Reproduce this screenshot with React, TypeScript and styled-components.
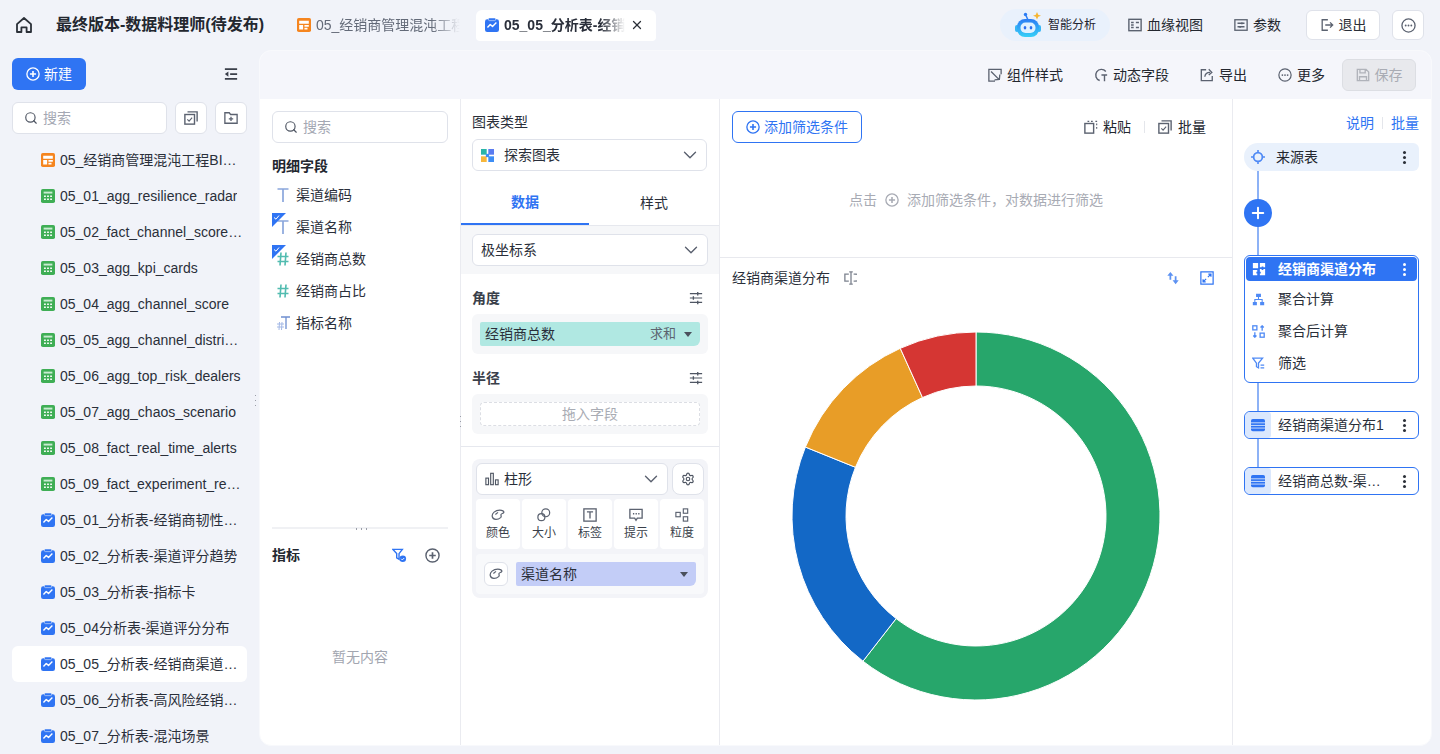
import React from 'react';
import styled, {createGlobalStyle} from "styled-components";
import {ChevronDown, Plus, Search, Settings, X} from "lucide-react";

const GlobalStyle = createGlobalStyle`
  html, body {
    margin: 0;
    height: 100%;
    overflow: hidden;
    background: #f1f3f9;
  }
  body {
    font-family: "Liberation Sans", "Noto Sans CJK SC", sans-serif;
    font-size: 14px;
    line-height: 20px;
    color: #1f2430;
  }
  * {
    box-sizing: border-box;
  }
`

const Page = styled.div`
  width: 1440px;
  height: 754px;
  display: flex;
  flex-direction: column;
  overflow: hidden;
`

const TopBar = styled.header`
  height: 50px;
  flex: none;
  display: flex;
  align-items: center;
  padding: 0 16px 0 15px;
`

const HomeButton = styled.div`
  width: 18px;
  height: 18px;
  margin-right: 23px;
  color: #2b3038;
`

const Title = styled.div`
  width: 223px;
  flex: none;
  font-size: 16px;
  line-height: 24px;
  font-weight: 700;
  white-space: nowrap;
  margin-right: 18px;
  color: #23272f;
`

const Tab = styled.div<{ $active?: boolean }>`
  display: flex;
  align-items: center;
  gap: 5px;
  height: 31px;
  padding: 0 ${p => p.$active ? "12px 0 9px" : "0"};
  width: ${p => p.$active ? "180px" : "163px"};
  margin-right: ${p => p.$active ? "0" : "16px"};
  background: ${p => p.$active ? "#fff" : "transparent"};
  border-radius: 6px 6px 4px 4px;
  font-weight: ${p => p.$active ? 700 : 400};
  color: ${p => p.$active ? "#2a2f3a" : "#636a78"};
  flex: none;
`

const TabText = styled.span`
  flex: 1;
  overflow: hidden;
  white-space: nowrap;
  mask-image: linear-gradient(to right, #000 80%, transparent 100%);
`

const TopRight = styled.div`
  margin-left: auto;
  display: flex;
  align-items: center;
`

const AiPill = styled.div`
  width: 110px;
  height: 32px;
  border-radius: 16px;
  background: #e9f1fc;
  display: flex;
  align-items: center;
  padding-left: 15px;
  gap: 5px;
  font-size: 12px;
  margin-right: 18px;
`

const TextAction = styled.div<{ $gap?: number, $inner?: number }>`
  display: flex;
  align-items: center;
  gap: ${p => p.$inner ?? 5}px;
  margin-right: ${p => p.$gap ?? 31}px;
  color: #23272f;
  white-space: nowrap;
`

const OutlineButton = styled.div<{ $width: number, $offset?: number }>`
  width: ${p => p.$width}px;
  height: 30px;
  margin-left: ${p => p.$offset ?? 0}px;
  background: #fff;
  border: 1px solid #dfe2ea;
  border-radius: 6px;
  display: flex;
  align-items: center;
  justify-content: center;
  gap: 5px;
  color: #2b3038;
`

const Body = styled.div`
  flex: 1;
  display: flex;
  min-height: 0;
  position: relative;
`

const Sidebar = styled.aside`
  width: 259px;
  flex: none;
  padding: 8px 12px 0;
  overflow: hidden;
`

const SideHead = styled.div`
  display: flex;
  align-items: center;
  justify-content: space-between;
  padding-right: 9px;
  margin-bottom: 12px;
`

const NewButton = styled.div`
  width: 74px;
  height: 32px;
  border-radius: 6px;
  background: #2f74f3;
  color: #fff;
  display: flex;
  align-items: center;
  justify-content: center;
  gap: 4px;
`

const SearchRow = styled.div`
  display: flex;
  gap: 8px;
  margin-bottom: 8px;
`

const SearchBox = styled.div<{ $width: number }>`
  width: ${p => p.$width}px;
  height: 32px;
  background: #fff;
  border: 1px solid #dfe2ea;
  border-radius: 6px;
  display: flex;
  align-items: center;
  gap: 5px;
  padding-left: 11px;
  color: #a4a8b3;
`

const SquareButton = styled.div`
  width: 32px;
  height: 32px;
  background: #fff;
  border: 1px solid #dfe2ea;
  border-radius: 6px;
  display: flex;
  align-items: center;
  justify-content: center;
  color: #5b6270;
`

const TreeRow = styled.div<{ $active?: boolean }>`
  height: 36px;
  width: 235px;
  display: flex;
  align-items: center;
  gap: 5px;
  padding: 0 4px 0 29px;
  border-radius: 6px;
  background: ${p => p.$active ? "#fff" : "transparent"};
  color: #2a2f3a;
`

const TreeText = styled.span`
  overflow: hidden;
  white-space: nowrap;
  text-overflow: ellipsis;
`

const Dots = styled.div<{ $x: number, $y: number, $wide?: boolean }>`
  position: absolute;
  left: ${p => p.$x}px;
  top: ${p => p.$y}px;
  width: ${p => p.$wide ? 14 : 5}px;
  height: ${p => p.$wide ? 8 : 14}px;
  background-image: radial-gradient(circle, #9a9ea8 0.8px, transparent 1px);
  background-size: ${p => p.$wide ? "5px 8px" : "5px 5px"};
`

const Panel = styled.main`
  flex: none;
  width: 1173px;
  height: 696px;
  background: #fff;
  border: 1px solid #f8f9fc;
  border-radius: 12px;
  overflow: hidden;
  display: flex;
  flex-direction: column;
`

const PanelBar = styled.div`
  height: 48px;
  flex: none;
  background: #f5f6fb;
  display: flex;
  align-items: center;
  justify-content: flex-end;
  padding-right: 15px;
`

const SaveButton = styled.div`
  width: 74px;
  height: 32px;
  border-radius: 6px;
  background: #e8e9ed;
  border: 1px solid #dcdee3;
  color: #a9acb4;
  display: flex;
  align-items: center;
  justify-content: center;
  gap: 5px;
`

const Columns = styled.div`
  flex: 1;
  min-height: 0;
  display: flex;
`

const FieldColumn = styled.section`
  width: 200px;
  flex: none;
  padding: 12px 12px 0;
  display: flex;
  flex-direction: column;
`

const GroupTitle = styled.div`
  font-weight: 700;
  margin: 15px 0 5px;
  line-height: 16px;
  color: #23272f;
`

const FieldRow = styled.div`
  height: 32px;
  display: flex;
  align-items: center;
  gap: 6px;
  padding-left: 4px;
  position: relative;
  color: #2a2f3a;
`

const CheckCorner = styled.svg`
  position: absolute;
  left: 0;
  top: 2px;
`

const FieldGlyph = styled.span`
  width: 14px;
  height: 16px;
  display: flex;
  align-items: center;
  justify-content: center;
`

const FieldDivider = styled.div`
  height: 2px;
  background: #f0f1f4;
  margin-top: 188px;
`

const MetricHead = styled.div`
  display: flex;
  align-items: center;
  height: 16px;
  margin-top: 18px;
  font-weight: 700;
  color: #23272f;
`

const MetricIcons = styled.div`
  margin-left: auto;
  padding-right: 8px;
  display: flex;
  gap: 18px;
  align-items: center;
`

const EmptyNote = styled.div`
  text-align: center;
  margin-top: 84px;
  color: #a2a6b0;
  line-height: 20px;
`

const ConfigColumn = styled.section`
  width: 260px;
  flex: none;
  border-left: 1px solid #eaebf0;
  border-right: 1px solid #eaebf0;
  display: flex;
  flex-direction: column;
`

const ConfigLabel = styled.div`
  padding: 15px 11px 9px;
  line-height: 16px;
  color: #2a2f3a;
`

const SelectBox = styled.div<{ $width?: number, $height?: number }>`
  width: ${p => p.$width ?? 235}px;
  height: ${p => p.$height ?? 32}px;
  background: #fff;
  border: 1px solid #dfe2ea;
  border-radius: 6px;
  display: flex;
  align-items: center;
  gap: 5px;
  padding: 0 5px 0 8px;
  color: #2a2f3a;
  flex: none;
`

const SelectText = styled.span<{ $indent?: number }>`
  flex: 1;
  margin-left: ${p => p.$indent ?? 0}px;
`

const ChartTypeWrap = styled.div`
  padding-left: 11px;
`

const TabRow = styled.div`
  margin-top: 9px;
  height: 46px;
  display: flex;
  border-bottom: 1px solid #e6e8ee;
`

const ConfigTab = styled.div<{ $active?: boolean }>`
  width: ${p => p.$active ? 128 : 130}px;
  height: 45px;
  display: flex;
  align-items: center;
  justify-content: center;
  font-weight: ${p => p.$active ? 700 : 400};
  color: ${p => p.$active ? "#2f74f3" : "#2a2f3a"};
  border-bottom: ${p => p.$active ? "2px solid #2f74f3" : "none"};
`

const CoordBand = styled.div`
  background: #f6f7f9;
  height: 48px;
  padding: 8px 11px 0;
`

const ShelfSection = styled.div`
  padding: 0 11px;
`

const ShelfHead = styled.div`
  height: 16px;
  margin: 16px 0 8px;
  display: flex;
  align-items: center;
  justify-content: space-between;
  font-weight: 700;
  color: #3a3f4a;
  padding-right: 5px;
`

const ShelfBox = styled.div`
  width: 236px;
  height: 40px;
  border-radius: 6px;
  background: #f6f7f9;
  padding: 8px;
`

const Pill = styled.div<{ $color: string }>`
  height: 24px;
  background: ${p => p.$color};
  border-radius: 2px 2px 6px 2px;
  display: flex;
  align-items: center;
  padding: 0 8px 0 5px;
  color: #2a2f3a;
`

const PillRight = styled.span`
  margin-left: auto;
  display: flex;
  align-items: center;
  gap: 8px;
  font-size: 13px;
  color: #5c6470;
`

const Caret = styled.span`
  width: 0;
  height: 0;
  border-left: 4px solid transparent;
  border-right: 4px solid transparent;
  border-top: 5px solid #4a505c;
  margin-left: auto;
`

const DropZone = styled.div`
  height: 24px;
  border: 1px dashed #dcdee4;
  border-radius: 4px;
  background: #fff;
  color: #a9acb4;
  display: flex;
  align-items: center;
  justify-content: center;
`

const SectionRule = styled.div`
  height: 1px;
  background: #e6e8ee;
  margin: 12px 0;
`

const MarkCard = styled.div`
  margin-left: 11px;
  width: 236px;
  height: 139px;
  background: #f3f4f8;
  border-radius: 8px;
  padding: 4px;
`

const MarkTop = styled.div`
  display: flex;
  gap: 4px;
`

const GearButton = styled(SquareButton)`
  border-radius: 8px;
`

const TileRow = styled.div`
  display: flex;
  gap: 2px;
  margin-top: 4px;
`

const Tile = styled.div`
  width: 44px;
  height: 50px;
  background: #fff;
  border-radius: 4px;
  display: flex;
  flex-direction: column;
  align-items: center;
  justify-content: center;
  gap: 3px;
  font-size: 12px;
  line-height: 16px;
  color: #3a3f4a;
`

const MarkField = styled.div`
  margin-top: 5px;
  height: 40px;
  background: #f8f9fb;
  border-radius: 4px;
  display: flex;
  align-items: center;
  gap: 8px;
  padding: 0 8px;
`

const PaletteButton = styled.div`
  width: 24px;
  height: 24px;
  flex: none;
  background: #fff;
  border: 1px solid #dfe2ea;
  border-radius: 6px;
  display: flex;
  align-items: center;
  justify-content: center;
`

const WidePill = styled(Pill)`
  flex: 1;
`

const CenterColumn = styled.section`
  width: 512px;
  flex: none;
  display: flex;
  flex-direction: column;
`

const FilterArea = styled.div`
  height: 159px;
  flex: none;
  border-bottom: 1px solid #e8e9ee;
  padding: 12px 12px 0;
`

const FilterTop = styled.div`
  display: flex;
  align-items: center;
`

const AddFilterButton = styled.div`
  width: 130px;
  height: 32px;
  border: 1px solid #2f74f3;
  border-radius: 6px;
  color: #2f74f3;
  display: flex;
  align-items: center;
  justify-content: center;
  gap: 4px;
`

const FilterActions = styled.div`
  margin-left: auto;
  padding-right: 14px;
  display: flex;
  align-items: center;
  color: #23272f;
`

const ThinSplit = styled.span<{ $space?: number }>`
  width: 1px;
  height: 12px;
  background: #e4e6eb;
  margin: 0 ${p => p.$space ?? 13}px;
`

const FilterHint = styled.div`
  display: flex;
  align-items: center;
  justify-content: center;
  gap: 8px;
  margin-top: 47px;
  height: 20px;
  color: #a8abb4;
`

const ChartHead = styled.div`
  height: 40px;
  flex: none;
  display: flex;
  align-items: center;
  padding: 0 18px 0 12px;
  color: #2a2f3a;
  gap: 14px;
`

const ChartHeadRight = styled.div`
  margin-left: auto;
  display: flex;
  align-items: center;
  gap: 20px;
`

const ChartBody = styled.div`
  flex: 1;
  display: flex;
  justify-content: center;
  padding-top: 33px;
`

const FlowColumn = styled.section`
  flex: 1;
  min-width: 0;
  padding: 14px 12px 0 11px;
  display: flex;
  flex-direction: column;
  border-left: 1px solid #eaebf0;
`

const FlowLinks = styled.div`
  align-self: flex-end;
  display: flex;
  align-items: center;
  color: #2f74f3;
  height: 20px;
  margin-bottom: 10px;
`

const SourceNode = styled.div`
  height: 28px;
  border-radius: 14px 6px 6px 14px;
  background: #e9f1fc;
  display: flex;
  align-items: center;
  padding: 0 5px 0 7px;
  gap: 11px;
  color: #23272f;
`

const MoreDots = styled.span<{ $light?: boolean }>`
  margin-left: auto;
  width: 20px;
  flex: none;
  display: flex;
  flex-direction: column;
  align-items: center;
  gap: 2px;
  i {
    display: block;
    width: 3px;
    height: 3px;
    border-radius: 50%;
    background: ${p => p.$light ? "#fff" : "#2b3038"};
  }
`

const Connector = styled.div<{ $height: number }>`
  height: ${p => p.$height}px;
  width: 28px;
  display: flex;
  align-items: center;
  justify-content: center;
  background: linear-gradient(#8db2f6, #8db2f6) center / 2px 100% no-repeat;
`

const PlusCircle = styled.div`
  width: 28px;
  height: 28px;
  border-radius: 50%;
  background: #2f74f3;
  display: flex;
  align-items: center;
  justify-content: center;
`

const NodeCard = styled.div`
  border: 1px solid #2f74f3;
  border-radius: 6px;
  padding: 1px;
  height: 128px;
`

const NodeHead = styled.div`
  height: 24px;
  margin-bottom: 2px;
  background: #2f74f3;
  border-radius: 4px;
  color: #fff;
  font-weight: 700;
  display: flex;
  align-items: center;
  gap: 12px;
  padding: 0 3px 0 6px;
`

const NodeStep = styled.div`
  height: 32px;
  display: flex;
  align-items: center;
  gap: 13px;
  padding-left: 6px;
  color: #2a2f3a;
`

const TableNode = styled.div`
  height: 28px;
  border: 1px solid #2f74f3;
  border-radius: 6px;
  display: flex;
  align-items: center;
  gap: 7px;
  padding-right: 4px;
  color: #2a2f3a;
  overflow: hidden;
`

const TableNodeIcon = styled.span`
  width: 26px;
  height: 26px;
  flex: none;
  background: #dbe8fd;
  border-radius: 5px 3px 3px 5px;
  display: flex;
  align-items: center;
  justify-content: center;
`

const NodeName = styled.span`
  overflow: hidden;
  white-space: nowrap;
  text-overflow: ellipsis;
  max-width: 107px;
`

type IconProps = { size?: number, color?: string }

const svgBase = (size: number) => ({
    width: size, height: size, viewBox: "0 0 16 16", fill: "none", style: {flex: "none"}
} as const)

const HomeIcon = () => (
    <svg width="18" height="18" viewBox="0 0 18 18" fill="none" stroke="currentColor" strokeWidth="1.8">
        <path d="M2 8.2 9 2l7 6.2V16h-4.4v-4.6H6.4V16H2z" strokeLinejoin="round"/>
    </svg>
)

const DashIcon = ({size = 14}: IconProps) => (
    <svg {...svgBase(size)}>
        <rect width="16" height="16" rx="2" fill="#f5851f"/>
        <path d="M2.5 3h11v3.5h-11zM2.5 8H7v5H2.5zM8.5 8h5v2h-5zM8.5 11.2h3.5V13H8.5z" fill="#fff"/>
    </svg>
)

const TableIcon = () => (
    <svg {...svgBase(14)}>
        <rect width="16" height="16" rx="2" fill="#3fae55"/>
        <path d="M3 3h10v2.2H3z" fill="#c9ebd1"/>
        <path d="M3.500 7.500h2v1.500h-2zM7 7.500h2v1.500H7zM10.500 7.500h2v1.500h-2zM3.500 10.800h2v1.700h-2zM7 10.800h2v1.700H7zM10.500 10.800h2v1.700h-2z" fill="#fff"/>
    </svg>
)

const AnalysisIcon = ({size = 14}: IconProps) => (
    <svg {...svgBase(size)}>
        <rect y="1.5" width="16" height="14.5" rx="2.5" fill="#2f74f3"/>
        <rect x="4" width="8" height="3" rx="1" fill="#2f74f3" stroke="#dbe6fb" strokeWidth=".7"/>
        <path d="m2.8 10.8 3.2-3.4 2.6 2.2 4.4-4.4" stroke="#fff" strokeWidth="1.6" strokeLinejoin="round"/>
    </svg>
)

const RobotIcon = () => (
    <svg width="28" height="26" viewBox="0 0 28 26" fill="none" style={{flex: "none"}}>
        <defs>
            <linearGradient id="robotFill" x1="0" y1="0" x2="0" y2="1">
                <stop offset="0" stopColor="#2b7cf4"/>
                <stop offset="1" stopColor="#36d0f7"/>
            </linearGradient>
        </defs>
        <path d="M13 8 11 3.500" stroke="#2b7cf4" strokeWidth="1.500"/>
        <circle cx="10.500" cy="2.500" r="1.700" fill="#2b7cf4"/>
        <path d="m22 0 1.200 2.800 2.800 1-2.800 1L22 7.600l-1.200-2.800-2.800-1 2.800-1z" fill="#f7b531"/>
        <rect x="0" y="13" width="4" height="7" rx="2" fill="#34b6f6"/>
        <rect x="22" y="13" width="4" height="7" rx="2" fill="#34b6f6"/>
        <rect x="2" y="7" width="22" height="18" rx="8" fill="url(#robotFill)"/>
        <rect x="5.500" y="10.500" width="15" height="10.500" rx="5" fill="#dff1ff"/>
        <ellipse cx="10" cy="15.700" rx="1.300" ry="1.800" fill="#2b6ff0"/>
        <ellipse cx="16" cy="15.700" rx="1.300" ry="1.800" fill="#2b6ff0"/>
    </svg>
)

const LineageIcon = () => (
    <svg {...svgBase(14)} stroke="#5b6270" strokeWidth="1.6">
        <rect x="1" y="1.5" width="14" height="13" fill="none"/>
        <path d="M3.500 5.200h3M3.500 8h3M3.500 10.800h3M9 5.200h3.500M9 10.800h3.500"/>
    </svg>
)

const ParamIcon = () => (
    <svg {...svgBase(14)} stroke="#5b6270" strokeWidth="1.5">
        <rect x="1" y="2" width="14" height="12"/>
        <path d="M4 6h8M4 10h8"/>
        <path d="M9 5v2M7 9v2" strokeWidth="1.8"/>
    </svg>
)

const ExitIcon = () => (
    <svg {...svgBase(14)} stroke="#5b6270" strokeWidth="1.500">
        <path d="M9 2H2.500v12H9M6 8h8.500M11.500 5l3 3-3 3"/>
    </svg>
)

const EllipsisCircle = ({size = 14, color = "#5b6270"}: IconProps) => (
    <svg {...svgBase(size)}>
        <circle cx="8" cy="8" r="7" stroke={color} strokeWidth="1.4"/>
        <circle cx="5" cy="8" r="1" fill={color}/>
        <circle cx="8" cy="8" r="1" fill={color}/>
        <circle cx="11" cy="8" r="1" fill={color}/>
    </svg>
)

const PlusCircleIcon = ({size = 14, color = "#fff"}: IconProps) => (
    <svg {...svgBase(size)} stroke={color}>
        <circle cx="8" cy="8" r="7" strokeWidth="1.5"/>
        <path d="M8 4.500v7M4.500 8h7" strokeWidth="1.8"/>
    </svg>
)

const CollapseIcon = () => (
    <svg {...svgBase(14)} stroke="#3a3f4a" strokeWidth="2">
        <path d="M1 2.500h14M7 8h8M1 13.500h14"/>
        <path d="M5 5v6L1 8z" fill="#3a3f4a" stroke="none"/>
    </svg>
)

const BatchIcon = ({size = 14}: IconProps) => (
    <svg {...svgBase(size)} stroke="#5b6270" strokeWidth="1.6">
        <rect x="1" y="4" width="11" height="11"/>
        <path d="M4 1h11v11"/>
        <path d="m3.800 9.500 2 2 3.500-4" strokeWidth="1.300"/>
    </svg>
)

const FolderPlusIcon = () => (
    <svg {...svgBase(14)} stroke="#5b6270" strokeWidth="1.500">
        <path d="M1 2h5l1.500 2H15v10H1z"/>
        <path d="M8 6.500v5M5.500 9h5"/>
    </svg>
)

const StyleIcon = () => (
    <svg {...svgBase(14)} stroke="#5b6270" strokeWidth="1.500">
        <path d="M15 7V1.500H1V15h7M3.500 4l9 9M7.500 13.500 13 13l.5-5.500"/>
    </svg>
)

const DynamicIcon = () => (
    <svg {...svgBase(14)} stroke="#5b6270" strokeWidth="1.600">
        <path d="M13.500 4A6.500 6.500 0 1 0 6.500 14.300M8.500 8h6.500M12 8v7"/>
    </svg>
)

const ExportIcon = () => (
    <svg {...svgBase(14)} stroke="#5b6270" strokeWidth="1.500">
        <path d="M7 2H1.500v12.500h12.500V9M5.500 10c.3-3 2.500-5 6-5M10 1.500 13.500 5 10 8"/>
    </svg>
)

const SaveIcon = () => (
    <svg {...svgBase(14)} stroke="#b0b3ba" strokeWidth="1.500">
        <path d="M1.500 1.500h10l3 3v10h-13zM4.500 1.500v4h6v-4M4 14.500V10h8v4.500"/>
    </svg>
)

const PasteIcon = () => (
    <svg {...svgBase(14)} stroke="#5b6270" strokeWidth="1.600">
        <rect x="1" y="4" width="10" height="11"/>
        <path d="M4 1.500h2M8 1.500h2M13 1.500h2M14.500 4v2M14.500 8v2" strokeWidth="1.300"/>
    </svg>
)

const TextGlyph = () => (
    <svg width="12" height="14" viewBox="0 0 12 14" stroke="#8aa6dc" strokeWidth="1.700" fill="none">
        <path d="M0.500 1h11M6 1v13"/>
    </svg>
)

const NumberGlyph = () => (
    <svg width="12" height="14" viewBox="0 0 12 14" stroke="#52bcb0" strokeWidth="1.600" fill="none">
        <path d="M0.500 4.500h11M0.500 9.500h11M4 .5 3 13.500M9 .5l-1 13"/>
    </svg>
)

const MixedGlyph = () => (
    <svg width="13" height="14" viewBox="0 0 13 14" fill="none">
        <path d="M4 1h9M9 1v12" stroke="#6f8fd0" strokeWidth="1.300"/>
        <path d="M0 8h7M0 11h7M2.500 6 2 14M5 6l-.5 8" stroke="#a4b9e6" strokeWidth="1"/>
    </svg>
)

const SliderIcon = () => (
    <svg {...svgBase(14)} stroke="#4f5663" strokeWidth="1.200">
        <path d="M1 3h14M1 8h14M1 13h14"/>
        <path d="M10 1v4M5 6v4M10 11v4" strokeWidth="1.500"/>
    </svg>
)

const FunnelCheckIcon = () => (
    <svg {...svgBase(15)}>
        <path d="M1 1.500h10L7.500 6v6L5 10.500V6z" stroke="#2f74f3" strokeWidth="1.500"/>
        <circle cx="11.500" cy="11.500" r="3.500" fill="#2f74f3"/>
        <path d="m9.800 11.500 1.200 1.200 2-2" stroke="#fff" strokeWidth="1"/>
    </svg>
)

const ExploreIcon = () => (
    <svg {...svgBase(13)}>
        <rect width="7" height="7" fill="#29b5a8"/>
        <rect x="9" width="7" height="7" fill="#5a7cf0"/>
        <rect y="9" width="7" height="7" fill="#f6b73c"/>
        <rect x="9" y="9" width="7" height="7" fill="#3d8ef5"/>
        <rect x="6" y="6" width="4" height="4" fill="#3d8ef5"/>
    </svg>
)

const BarsIcon = () => (
    <svg {...svgBase(14)} stroke="#4f5663" strokeWidth="1.300">
        <rect x="1" y="7" width="3" height="7.500"/>
        <rect x="6.500" y="1.500" width="3" height="13"/>
        <rect x="12" y="9" width="3" height="5.500"/>
    </svg>
)

const PaletteIcon = () => (
    <svg {...svgBase(14)} stroke="#5b6270" strokeWidth="1.400">
        <path d="M1.500 10C.5 6 5 2.500 10 2.500c3 0 5 1.200 4.600 2.600-.4 1.400-3 1-3.200 2.500-.2 1.600 1 2-.4 3.400C8 13.500 2.500 14 1.500 10z"/>
        <path d="M5 7.500 8 5"/>
    </svg>
)

const SizeIcon = () => (
    <svg {...svgBase(14)} stroke="#5b6270" strokeWidth="1.400">
        <circle cx="10" cy="5.500" r="4.500"/>
        <circle cx="5" cy="10.500" r="4"/>
    </svg>
)

const LabelIcon = () => (
    <svg {...svgBase(14)} stroke="#5b6270" strokeWidth="1.500">
        <rect x="1" y="1" width="14" height="14"/>
        <path d="M4.500 4.500h7M8 4.500V12"/>
    </svg>
)

const TipIcon = () => (
    <svg {...svgBase(14)} stroke="#5b6270" strokeWidth="1.500">
        <path d="M1 1.500h14v10H9.500L8 14l-1.500-2.500H1z"/>
        <path d="M4.500 6.500H6M7.500 6.500H9M10.500 6.500H12" strokeWidth="1.700"/>
    </svg>
)

const GrainIcon = () => (
    <svg {...svgBase(14)} stroke="#5b6270" strokeWidth="1.300">
        <rect x="1" y="5" width="5" height="5"/>
        <rect x="9.500" y="1" width="5" height="5"/>
        <rect x="9.500" y="10" width="5" height="5"/>
    </svg>
)

const CursorIcon = () => (
    <svg {...svgBase(14)} stroke="#7d838f" strokeWidth="1.500">
        <path d="M5.500 3.500H1v8h4.500M11 3.500h3v1M14 10.500v1h-3M6 1h4M6 15h4M8 1v14"/>
    </svg>
)

const SwapIcon = () => (
    <svg {...svgBase(14)} fill="#5d92f2">
        <path d="M5 1 1.500 5.500H4V10h2V5.500h2.500zM11 15l3.500-4.500H12V6h-2v4.500H7.500z"/>
    </svg>
)

const ExpandIcon = () => (
    <svg {...svgBase(14)} stroke="#2f74f3" strokeWidth="1.400">
        <rect x="1" y="1" width="14" height="14"/>
        <path d="M9 7l3.500-3.500M9.500 3.500h3v3M7 9l-3.500 3.500M3.500 9.500v3h3"/>
    </svg>
)

const TargetIcon = () => (
    <svg {...svgBase(14)} stroke="#4f8af5" strokeWidth="2">
        <circle cx="8" cy="8" r="5"/>
        <path d="M8 0v3.500M8 12.500V16M0 8h3.500M12.500 8H16" strokeWidth="1.800"/>
    </svg>
)

const PuzzleIcon = () => (
    <svg {...svgBase(14)} fill="#fff">
        <path d="M1 1h6v6H1zM9 1h6v5H9zM1 9h5v6H1zM9 8h6v7H9z"/>
        <path d="M11 5h2v4h-2zM5 11h5v2H5z" fill="#2f74f3"/>
    </svg>
)

const AggIcon = () => (
    <svg {...svgBase(13)} fill="#4f8af5">
        <path d="M5 1h6v4H5zM1 11h5v4H1zM10 11h5v4h-5z"/>
        <path d="M8 5v3M3.500 11V8h9v3" stroke="#4f8af5" strokeWidth="1.300" fill="none"/>
    </svg>
)

const PostAggIcon = () => (
    <svg {...svgBase(13)} stroke="#4f8af5" strokeWidth="1.600">
        <rect x="1" y="1" width="5" height="5"/>
        <rect x="10" y="10" width="5" height="5"/>
        <path d="M12.500 7V1M10.500 3l2-2 2 2M3.500 9v6M1.500 13l2 2 2-2"/>
    </svg>
)

const FilterIcon = () => (
    <svg {...svgBase(13)} stroke="#4f8af5" strokeWidth="1.600">
        <path d="M1 1.500h12L8 7.500v6l-2.500-1.500V7.500zM10.500 10H15M10.500 13.500H15"/>
    </svg>
)

const RowsIcon = () => (
    <svg {...svgBase(14)} fill="#2f74f3">
        <rect y="1" width="16" height="14" rx="2"/>
        <path d="M0 5.500h16M0 8.500h16M0 11.500h16" stroke="#dbe8fd" strokeWidth="1"/>
    </svg>
)

// angles run clockwise from the top of the ring
const slices = [
    {color: "#27a66b", from: 0, to: 217.9},
    {color: "#1368c6", from: 217.9, to: 292},
    {color: "#e89d27", from: 292, to: 335.7},
    {color: "#d53633", from: 335.7, to: 360}
]

const RING_CENTER = 185
const RING_OUTER = 184
const RING_INNER = 130

const ringPoint = (radius: number, angle: number) => {
    const rad = (angle - 90) * Math.PI / 180
    return `${(RING_CENTER + radius * Math.cos(rad)).toFixed(2)} ${(RING_CENTER + radius * Math.sin(rad)).toFixed(2)}`
}

const ringPath = (from: number, to: number) => {
    const large = to - from > 180 ? 1 : 0
    return `M${ringPoint(RING_OUTER, from)}A${RING_OUTER} ${RING_OUTER} 0 ${large} 1 ${ringPoint(RING_OUTER, to)}` +
        `L${ringPoint(RING_INNER, to)}A${RING_INNER} ${RING_INNER} 0 ${large} 0 ${ringPoint(RING_INNER, from)}Z`
}

const treeItems = [
    {kind: "dash", name: "05_经销商管理混沌工程BI看板"},
    {kind: "table", name: "05_01_agg_resilience_radar"},
    {kind: "table", name: "05_02_fact_channel_score_trend"},
    {kind: "table", name: "05_03_agg_kpi_cards"},
    {kind: "table", name: "05_04_agg_channel_score"},
    {kind: "table", name: "05_05_agg_channel_distribution"},
    {kind: "table", name: "05_06_agg_top_risk_dealers"},
    {kind: "table", name: "05_07_agg_chaos_scenario"},
    {kind: "table", name: "05_08_fact_real_time_alerts"},
    {kind: "table", name: "05_09_fact_experiment_results"},
    {kind: "chart", name: "05_01_分析表-经销商韧性雷达图"},
    {kind: "chart", name: "05_02_分析表-渠道评分趋势"},
    {kind: "chart", name: "05_03_分析表-指标卡"},
    {kind: "chart", name: "05_04分析表-渠道评分分布"},
    {kind: "chart", name: "05_05_分析表-经销商渠道分布", active: true},
    {kind: "chart", name: "05_06_分析表-高风险经销商排行"},
    {kind: "chart", name: "05_07_分析表-混沌场景"}
]

const fields = [
    {name: "渠道编码", glyph: <TextGlyph/>},
    {name: "渠道名称", glyph: <TextGlyph/>, checked: true},
    {name: "经销商总数", glyph: <NumberGlyph/>, checked: true},
    {name: "经销商占比", glyph: <NumberGlyph/>},
    {name: "指标名称", glyph: <MixedGlyph/>}
]

const tiles = [
    {name: "颜色", icon: <PaletteIcon/>},
    {name: "大小", icon: <SizeIcon/>},
    {name: "标签", icon: <LabelIcon/>},
    {name: "提示", icon: <TipIcon/>},
    {name: "粒度", icon: <GrainIcon/>}
]

const SelectChevron = () => <ChevronDown size={22} color="#5b6270" strokeWidth={1.5}/>

const App: React.FC = () => {
    return (
        <Page>
            <GlobalStyle/>
            <TopBar>
                <HomeButton><HomeIcon/></HomeButton>
                <Title>最终版本-数据料理师(待发布)</Title>
                <Tab><DashIcon/><TabText>05_经销商管理混沌工程BI看板</TabText></Tab>
                <Tab $active>
                    <AnalysisIcon/>
                    <TabText>05_05_分析表-经销商渠道分布</TabText>
                    <X size={14} color="#2b3038" strokeWidth={2.2}/>
                </Tab>
                <TopRight>
                    <AiPill><RobotIcon/>智能分析</AiPill>
                    <TextAction><LineageIcon/>血缘视图</TextAction>
                    <TextAction $gap={25}><ParamIcon/>参数</TextAction>
                    <OutlineButton $width={74}><ExitIcon/>退出</OutlineButton>
                    <OutlineButton $width={32} $offset={12}><EllipsisCircle size={15}/></OutlineButton>
                </TopRight>
            </TopBar>
            <Body>
                <Sidebar>
                    <SideHead>
                        <NewButton><PlusCircleIcon/>新建</NewButton>
                        <CollapseIcon/>
                    </SideHead>
                    <SearchRow>
                        <SearchBox $width={155}>
                            <Search size={14} color="#4f5663"/>搜索
                        </SearchBox>
                        <SquareButton><BatchIcon/></SquareButton>
                        <SquareButton><FolderPlusIcon/></SquareButton>
                    </SearchRow>
                    {treeItems.map((item) => (
                        <TreeRow key={item.name} $active={item.active}>
                            {item.kind === "dash" && <DashIcon/>}
                            {item.kind === "table" && <TableIcon/>}
                            {item.kind === "chart" && <AnalysisIcon/>}
                            <TreeText>{item.name}</TreeText>
                        </TreeRow>
                    ))}
                </Sidebar>
                <Dots $x={253} $y={343}/>
                <Dots $x={458} $y={364}/>
                <Dots $x={354} $y={475} $wide/>
                <Panel>
                    <PanelBar>
                        <TextAction><StyleIcon/>组件样式</TextAction>
                        <TextAction><DynamicIcon/>动态字段</TextAction>
                        <TextAction><ExportIcon/>导出</TextAction>
                        <TextAction $gap={17}><EllipsisCircle/>更多</TextAction>
                        <SaveButton><SaveIcon/>保存</SaveButton>
                    </PanelBar>
                    <Columns>
                        <FieldColumn>
                            <SearchBox $width={176}>
                                <Search size={14} color="#4f5663"/>搜索
                            </SearchBox>
                            <GroupTitle>明细字段</GroupTitle>
                            {fields.map((field) => (
                                <FieldRow key={field.name}>
                                    {field.checked && (
                                        <CheckCorner width="14" height="14" viewBox="0 0 14 14">
                                            <path d="M0 0h14L0 14z" fill="#2f74f3"/>
                                            <path d="m2 4.500 2 1.700 3-3.700" stroke="#fff" strokeWidth="1" fill="none"/>
                                        </CheckCorner>
                                    )}
                                    <FieldGlyph>{field.glyph}</FieldGlyph>
                                    {field.name}
                                </FieldRow>
                            ))}
                            <FieldDivider/>
                            <MetricHead>
                                指标
                                <MetricIcons>
                                    <FunnelCheckIcon/>
                                    <PlusCircleIcon size={15} color="#5b6270"/>
                                </MetricIcons>
                            </MetricHead>
                            <EmptyNote>暂无内容</EmptyNote>
                        </FieldColumn>
                        <ConfigColumn>
                            <ConfigLabel>图表类型</ConfigLabel>
                            <ChartTypeWrap>
                                <SelectBox>
                                    <ExploreIcon/>
                                    <SelectText $indent={5}>探索图表</SelectText>
                                    <SelectChevron/>
                                </SelectBox>
                            </ChartTypeWrap>
                            <TabRow>
                                <ConfigTab $active>数据</ConfigTab>
                                <ConfigTab>样式</ConfigTab>
                            </TabRow>
                            <CoordBand>
                                <SelectBox $width={236}>
                                    <SelectText>极坐标系</SelectText>
                                    <SelectChevron/>
                                </SelectBox>
                            </CoordBand>
                            <ShelfSection>
                                <ShelfHead>角度<SliderIcon/></ShelfHead>
                                <ShelfBox>
                                    <Pill $color="#b0e8e2">
                                        经销商总数
                                        <PillRight>求和<Caret/></PillRight>
                                    </Pill>
                                </ShelfBox>
                                <ShelfHead>半径<SliderIcon/></ShelfHead>
                                <ShelfBox>
                                    <DropZone>拖入字段</DropZone>
                                </ShelfBox>
                            </ShelfSection>
                            <SectionRule/>
                            <MarkCard>
                                <MarkTop>
                                    <SelectBox $width={192}>
                                        <BarsIcon/>
                                        <SelectText>柱形</SelectText>
                                        <SelectChevron/>
                                    </SelectBox>
                                    <GearButton><Settings size={14} color="#4f5663"/></GearButton>
                                </MarkTop>
                                <TileRow>
                                    {tiles.map((tile) => (
                                        <Tile key={tile.name}>{tile.icon}{tile.name}</Tile>
                                    ))}
                                </TileRow>
                                <MarkField>
                                    <PaletteButton><PaletteIcon/></PaletteButton>
                                    <WidePill $color="#c3cdf7">渠道名称<Caret/></WidePill>
                                </MarkField>
                            </MarkCard>
                        </ConfigColumn>
                        <CenterColumn>
                            <FilterArea>
                                <FilterTop>
                                    <AddFilterButton>
                                        <PlusCircleIcon color="#2f74f3"/>添加筛选条件
                                    </AddFilterButton>
                                    <FilterActions>
                                        <TextAction $gap={0}><PasteIcon/>粘贴</TextAction>
                                        <ThinSplit/>
                                        <TextAction $gap={0} $inner={6}><BatchIcon/>批量</TextAction>
                                    </FilterActions>
                                </FilterTop>
                                <FilterHint>
                                    点击
                                    <PlusCircleIcon color="#a8abb4"/>
                                    添加筛选条件，对数据进行筛选
                                </FilterHint>
                            </FilterArea>
                            <ChartHead>
                                经销商渠道分布
                                <CursorIcon/>
                                <ChartHeadRight>
                                    <SwapIcon/>
                                    <ExpandIcon/>
                                </ChartHeadRight>
                            </ChartHead>
                            <ChartBody>
                                <svg width="370" height="370" viewBox="0 0 370 370">
                                    {slices.map((slice) => (
                                        <path key={slice.color} d={ringPath(slice.from, slice.to)}
                                              fill={slice.color} stroke="#fff" strokeWidth="1"/>
                                    ))}
                                </svg>
                            </ChartBody>
                        </CenterColumn>
                        <FlowColumn>
                            <FlowLinks>说明<ThinSplit $space={8}/>批量</FlowLinks>
                            <SourceNode>
                                <TargetIcon/>来源表
                                <MoreDots><i/><i/><i/></MoreDots>
                            </SourceNode>
                            <Connector $height={84}>
                                <PlusCircle><Plus size={18} color="#fff" strokeWidth={2.6}/></PlusCircle>
                            </Connector>
                            <NodeCard>
                                <NodeHead>
                                    <PuzzleIcon/>经销商渠道分布
                                    <MoreDots $light><i/><i/><i/></MoreDots>
                                </NodeHead>
                                <NodeStep><AggIcon/>聚合计算</NodeStep>
                                <NodeStep><PostAggIcon/>聚合后计算</NodeStep>
                                <NodeStep><FilterIcon/>筛选</NodeStep>
                            </NodeCard>
                            <Connector $height={28}/>
                            <TableNode>
                                <TableNodeIcon><RowsIcon/></TableNodeIcon>
                                <NodeName>经销商渠道分布1</NodeName>
                                <MoreDots><i/><i/><i/></MoreDots>
                            </TableNode>
                            <Connector $height={28}/>
                            <TableNode>
                                <TableNodeIcon><RowsIcon/></TableNodeIcon>
                                <NodeName>经销商总数-渠道名称</NodeName>
                                <MoreDots><i/><i/><i/></MoreDots>
                            </TableNode>
                        </FlowColumn>
                    </Columns>
                </Panel>
            </Body>
        </Page>
    );
};

export default App;
